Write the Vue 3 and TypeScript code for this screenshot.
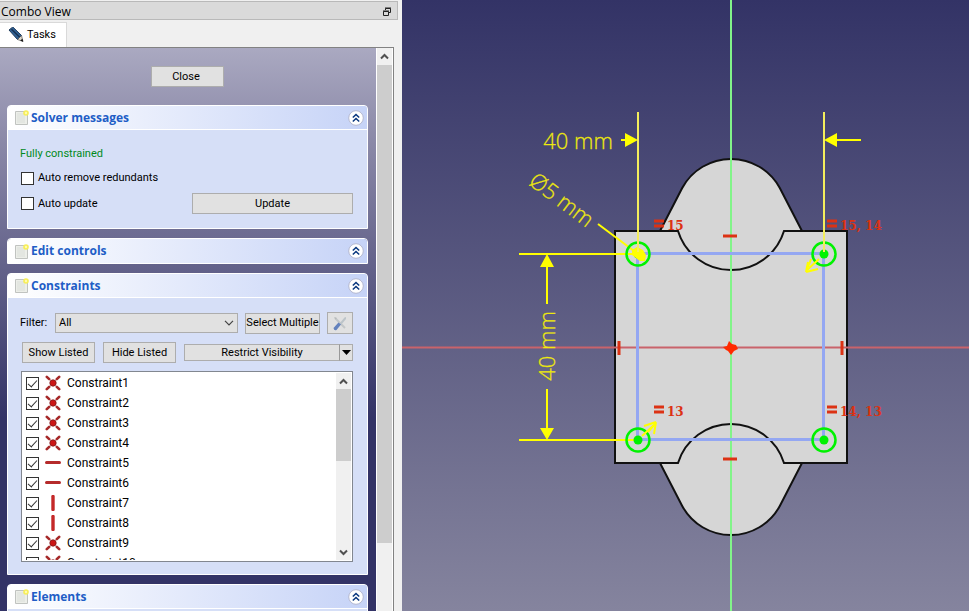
<script setup lang="ts">
import { ref } from 'vue'

type Kind = 'coincident' | 'horizontal' | 'vertical'
interface Constraint { name: string; kind: Kind; on: boolean }

const kinds: Kind[] = [
  'coincident', 'coincident', 'coincident', 'coincident', 'horizontal',
  'horizontal', 'vertical', 'vertical', 'coincident', 'coincident',
]
const constraints = ref<Constraint[]>(
  kinds.map((kind, i) => ({ name: `Constraint${i + 1}`, kind, on: true })),
)
const autoRemove = ref(false)
const autoUpdate = ref(false)
const filter = ref('All')

const sections = [
  { id: 'solver', title: 'Solver messages' },
  { id: 'edit', title: 'Edit controls' },
  { id: 'constraints', title: 'Constraints' },
  { id: 'elements', title: 'Elements' },
]
const corners = [
  { x: 638, y: 254 },
  { x: 824, y: 254 },
  { x: 638, y: 440 },
  { x: 824, y: 440 },
]
const equals = [
  { x: 654, y: 219, text: '15' },
  { x: 827, y: 219, text: '15, 14' },
  { x: 654, y: 405, text: '13' },
  { x: 827, y: 405, text: '14, 13' },
]
</script>

<template>
  <div class="app">
    <aside class="dock">
      <header class="dock-title">
        <span>Combo View</span>
        <button class="float" aria-label="Float panel">
          <svg width="10" height="10" viewBox="0 0 10 10">
            <path d="M3.5 3V1.500h5v4H7M3 1h6" fill="none" stroke="#222" />
            <path d="M1.500 4.500h5v4h-5zM1 4h6" fill="none" stroke="#222" />
          </svg>
        </button>
      </header>
      <nav class="tabs">
        <button class="tab">
          <svg width="16" height="16" viewBox="0 0 16 16">
            <path d="M1 3 4.800 0 13.500 8.500 9.500 12.500z" fill="#2f5f92" stroke="#1c3a5c" />
            <path d="M3.500 2.200 12 10.500" stroke="#16304f" stroke-width="1.400" />
            <path d="M13.500 8.500l1.500 6-5.500-2z" fill="#ddd8cc" stroke="#444" stroke-width=".6" />
            <path d="M15.200 14.800l-3-1.200 2.200-1.800z" fill="#111" />
          </svg>
          <span>Tasks</span>
        </button>
      </nav>

      <div class="tasks">
        <div class="task-list">
          <button class="btn close">Close</button>

          <section v-for="s in sections" :key="s.id" class="group">
            <h2 class="group-head">
              <svg class="page" width="14" height="15" viewBox="0 0 14 15">
                <path d="M.5 1.500h12v13H.5z" fill="#eceee9" stroke="#c0c3c0" />
                <path d="M2 3h8v10H2z" fill="#e3e6e1" />
                <circle cx="11" cy="3" r="2.800" fill="#f7ee58" />
                <circle cx="11" cy="3" r="1.200" fill="#fffbb0" />
              </svg>
              <span>{{ s.title }}</span>
              <button class="fold" :aria-label="`Collapse ${s.title}`">
                <svg width="16" height="16" viewBox="0 0 16 16">
                  <circle cx="8" cy="8" r="7.300" fill="#fff" stroke="#b4b8d0" />
                  <path d="M4.800 7.500 8 4.500l3.200 3M4.800 11.500 8 8.500l3.200 3" fill="none" stroke="#0c3a80" stroke-width="1.600" />
                </svg>
              </button>
            </h2>

            <div v-if="s.id === 'solver'" class="group-body solver">
              <p class="status">Fully constrained</p>
              <label class="check"><input v-model="autoRemove" type="checkbox" />Auto remove redundants</label>
              <div class="row update-row">
                <label class="check"><input v-model="autoUpdate" type="checkbox" />Auto update</label>
                <button class="btn update">Update</button>
              </div>
            </div>

            <div v-else-if="s.id === 'constraints'" class="group-body panel">
              <div class="row filter-row">
                <label for="filter">Filter:</label>
                <div class="select">
                  <select id="filter" v-model="filter">
                    <option>All</option>
                    <option>Normal</option>
                  </select>
                  <svg width="10" height="6" viewBox="0 0 10 6">
                    <path d="M1 .8l4 4 4-4" fill="none" stroke="#444" stroke-width="1.200" />
                  </svg>
                </div>
                <button class="btn multi">Select Multiple</button>
                <button class="btn tool" aria-label="Settings">
                  <svg width="16" height="16" viewBox="0 0 16 16">
                    <path d="M3 3l10 10" stroke="#c3c7c8" stroke-width="2" />
                    <path d="M2 2l1.500 2.500L5 3z" fill="#b5babb" />
                    <path d="M7.500 8.500l5-6 1.500-.5v2l-5 6z" fill="#bcc4c9" />
                    <path d="M1.500 13l5-5.500 2.500 2-4.500 5.500q-2.500 1-3-2z" fill="#6482bd" />
                  </svg>
                </button>
              </div>
              <div class="row button-row">
                <button class="btn listed">Show Listed</button>
                <button class="btn listed">Hide Listed</button>
                <div class="split">
                  <button class="btn restrict">Restrict Visibility</button>
                  <button class="btn drop" aria-label="Visibility options">
                    <svg width="9" height="5" viewBox="0 0 9 5"><path d="M0 0h9L4.500 5z" /></svg>
                  </button>
                </div>
              </div>
              <div class="list">
                <ul>
                  <li v-for="c in constraints" :key="c.name">
                    <label>
                      <input v-model="c.on" type="checkbox" />
                      <svg width="16" height="16" viewBox="0 0 16 16">
                        <g v-if="c.kind === 'coincident'">
                          <path d="M1.800 1.800l2.400 2.400M14.200 1.800l-2.400 2.400M1.800 14.200l2.400-2.400M14.200 14.200l-2.400-2.400" stroke="#a62a2a" stroke-width="2.600" stroke-linecap="round" />
                          <circle cx="8" cy="8" r="3.200" fill="#cc1414" stroke="#7c1a1a" stroke-width=".8" />
                        </g>
                        <path v-else-if="c.kind === 'horizontal'" d="M1.500 7.500h13" stroke="#b52b2b" stroke-width="3" stroke-linecap="round" />
                        <path v-else d="M8 1.500v13" stroke="#c42828" stroke-width="3.400" stroke-linecap="round" />
                      </svg>
                      <span>{{ c.name }}</span>
                    </label>
                  </li>
                </ul>
                <div class="bar inner">
                  <button aria-label="Scroll list up">
                    <svg width="9" height="7" viewBox="0 0 9 7"><path d="M1 5.500 4.500 2 8 5.500" /></svg>
                  </button>
                  <span class="thumb"></span>
                  <button aria-label="Scroll list down">
                    <svg width="9" height="7" viewBox="0 0 9 7"><path d="M1 1.500 4.500 5 8 1.500" /></svg>
                  </button>
                </div>
              </div>
            </div>

            <div v-else-if="s.id === 'elements'" class="group-body blank"></div>
          </section>
        </div>
        <div class="bar outer">
          <button aria-label="Scroll up">
            <svg width="9" height="7" viewBox="0 0 9 7"><path d="M1 5.500 4.500 2 8 5.500" /></svg>
          </button>
          <span class="thumb"></span>
        </div>
      </div>
    </aside>

    <main class="view">
      <svg class="sketch" viewBox="402 0 567 611" preserveAspectRatio="xMidYMid slice">
        <g class="solid">
          <path d="M660 231 682.200 188A55.500 55.500 0 0 1 779.800 188L802 231V463L779.800 506A55.500 55.500 0 0 1 682.200 506L660 463z" />
          <path class="face" d="M615 231h232v232H615z" />
          <path d="M615 231h63a55.500 55.500 0 0 0 106 0h63v232h-63a55.500 55.500 0 0 0-106 0h-63z" />
        </g>

        <path d="M402 347.500h567" stroke="#c9636b" stroke-width="2" />
        <path d="M731 0v611" stroke="#82f489" stroke-width="2" />
        <path d="M637.500 253.500h186v186h-186z" fill="none" stroke="#94a7f2" stroke-width="3" />

        <g class="dim">
          <path d="M638 112v142M824 112v142" />
          <path d="M621 140h5M861 140h-25" />
          <path d="M519 254h119M519 440h119" />
          <path d="M547 266v38M547 389v39M598 224l40 30" />
          <g class="heads">
            <path d="M638 140l-13-7v14zM824 140l13-7v14z" />
            <path d="M547 254l-7 13h14zM547 440l-7-12h14z" />
          </g>
        </g>
        <g class="dim-text">
          <text x="578" y="149">40 mm</text>
          <text transform="translate(555 346) rotate(-90)">40 mm</text>
          <text transform="translate(557 206) rotate(37)">Ø5 mm</text>
        </g>

        <g class="points">
          <g v-for="p in corners" :key="`${p.x}-${p.y}`">
            <circle class="hole" :cx="p.x" :cy="p.y" r="11.500" />
            <circle class="dot" :cx="p.x" :cy="p.y" r="4.500" />
          </g>
        </g>
        <path d="M632 250l5-3 6 3 3 5-1 6h-5l-8-6z" fill="#ff0" />
        <path d="M638 112v140M824 112v140" stroke="#f4ee5c" stroke-width="2" />
        <g class="radius">
          <path d="M819 259l-12 11M806 272l2-10M806 272l12-3M811 259l-3 8" />
          <path d="M642 436l13-12M656 422l-12 4M656 422l-2 12M648 432l7-8" />
        </g>

        <g class="marks">
          <path d="M723 236h14M723 459h14M619 341v14M842 341v14" />
          <path class="origin" d="M723 347l4-1 2-5 3 3 4 1 2 4-4 2-3 4-3-4-2-1z" />
          <g v-for="e in equals" :key="e.text">
            <path :d="`M${e.x} ${e.y + 2}h10M${e.x} ${e.y + 7}h10`" />
            <text :x="e.x + 13" :y="e.y + 11">{{ e.text }}</text>
          </g>
        </g>
      </svg>
    </main>
  </div>
</template>

<style>
body {
  margin: 0;
}
</style>

<style scoped>
.app {
  display: flex;
  height: 100vh;
  overflow: hidden;
  font: 11px/14px Roboto, "Noto Sans", sans-serif;
  color: #000;
}
.app *,
.app *::before {
  box-sizing: border-box;
}
button {
  margin: 0;
  padding: 0;
  border: 0;
  background: none;
  color: inherit;
  font: inherit;
}
svg {
  display: block;
  flex: none;
}
.dock {
  display: flex;
  flex: 0 0 402px;
  flex-direction: column;
  background: #f0f0f0;
}
.dock-title {
  display: flex;
  align-items: center;
  justify-content: space-between;
  flex: none;
  height: 19px;
  margin: 1px 4px 0 0;
  padding: 2px 5px 0 1px;
  border: 1px solid #b9b9b9;
  border-left: 0;
  background: #dadada;
  font-family: "Open Sans", sans-serif;
  font-size: 12px;
}
.tabs {
  display: flex;
  flex: none;
  height: 27px;
  padding-top: 2px;
}
.tab {
  display: flex;
  align-items: center;
  gap: 3px;
  width: 67px;
  padding-left: 8px;
  border: 1px solid #d9d9d9;
  border-width: 1px 1px 0 0;
  background: #fff;
}
.tasks {
  display: flex;
  flex: 1;
  min-height: 0;
  margin-right: 8px;
  border: 1px solid #828282;
  border-width: 1px 1px 0 0;
}
.task-list {
  display: flex;
  flex: 1;
  flex-direction: column;
  gap: 9px;
  min-width: 0;
  overflow: hidden;
  padding: 18px 8px 0 7px;
  background: linear-gradient(#aaa9c1 0, #8f8dab 80px, #333366 370px);
}
.btn {
  border: 1px solid #adadad;
  background: #e1e1e1;
  white-space: nowrap;
}
.close {
  flex: none;
  align-self: center;
  width: 73px;
  height: 21px;
  margin-bottom: 9px;
  padding-right: 3px;
}
.group {
  flex: none;
  overflow: hidden;
  border: 1px solid #fff;
  border-radius: 4px 4px 0 0;
  background: #d6dff7;
}
.group-head {
  display: flex;
  align-items: center;
  height: 23px;
  margin: 0;
  padding: 0 3px 0 7px;
  background: linear-gradient(90deg, #fff, #c6d3f7);
  color: #215dc6;
  font-family: "Open Sans", sans-serif;
  font-size: 12px;
  font-weight: 700;
}
.group-head:only-child {
  height: 24px;
}
.group-head span {
  flex: 1;
  padding-left: 2px;
}
.group-body {
  border-top: 1px solid #fff;
  padding: 0 14px 14px 12px;
}
.solver {
  padding-top: 16px;
}
.status {
  margin: 0 0 8px;
  height: 16px;
  line-height: 16px;
  color: #008a1c;
}
.row {
  display: flex;
  align-items: center;
}
.check {
  display: flex;
  align-items: center;
  gap: 4px;
  height: 16px;
}
.update-row {
  justify-content: space-between;
  margin-top: 7px;
}
.update {
  width: 161px;
  height: 21px;
}
input {
  display: grid;
  place-items: center;
  flex: none;
  width: 13px;
  height: 13px;
  margin: 0;
  border: 1px solid #333;
  background: #fff;
  appearance: none;
}
.solver input {
  margin-left: 1px;
}
input:checked::before {
  width: 5px;
  height: 9px;
  margin-bottom: 2px;
  border: solid #333;
  border-width: 0 1px 1px 0;
  transform: rotate(42deg);
  content: "";
}
.panel {
  padding-top: 14px;
  padding-bottom: 12px;
}
.filter-row label {
  width: 35px;
}
.select {
  display: grid;
  flex: 1;
  align-items: center;
  margin-right: 7px;
}
.select > * {
  grid-area: 1 / 1;
}
.select svg {
  justify-self: end;
  margin-right: 4px;
  pointer-events: none;
}
select {
  width: 100%;
  height: 20px;
  padding: 0 3px;
  border: 1px solid #adadad;
  border-radius: 0;
  background: #e1e1e1;
  color: inherit;
  font: inherit;
  appearance: none;
}
.multi {
  width: 75px;
  height: 21px;
  margin-right: 7px;
}
.tool {
  display: grid;
  place-items: center;
  width: 26px;
  height: 22px;
}
.button-row {
  gap: 8px;
  margin: 8px 0 8px 2px;
}
.listed {
  width: 73px;
  height: 21px;
}
.split {
  display: flex;
  flex: 1;
  height: 17px;
}
.restrict {
  flex: 1;
  border-right: 0;
  line-height: 14px;
}
.drop {
  display: grid;
  place-items: center;
  width: 14px;
  border-left-color: #999;
}
.list {
  display: flex;
  height: 191px;
  margin-left: 1px;
  padding: 1px;
  border: 1px solid #828790;
  background: #fff;
}
.list ul {
  flex: 1;
  margin: 0;
  padding: 0;
  overflow: hidden;
  list-style: none;
}
.list label {
  display: flex;
  align-items: center;
  height: 20px;
  padding-left: 3px;
  font-size: 12px;
}
.list label svg {
  margin: 0 6px;
}
.bar {
  display: flex;
  flex: none;
  flex-direction: column;
  background: #f0f0f0;
}
.bar button {
  display: grid;
  place-items: center;
  height: 16px;
}
.bar path {
  fill: none;
  stroke: #505050;
  stroke-width: 2;
}
.thumb {
  background: #cdcdcd;
}
.inner {
  width: 15px;
}
.inner .thumb {
  height: 72px;
  margin-bottom: auto;
}
.outer {
  width: 17px;
  border: solid #fff;
  border-width: 0 1px;
}
.outer button {
  height: 17px;
}
.outer .thumb {
  height: 478px;
}
.blank {
  height: 60px;
}
.view {
  flex: 1;
  min-width: 0;
  background: linear-gradient(#333366, #85849e);
}
.sketch {
  width: 100%;
  height: 100%;
}
.solid path {
  fill: #d6d6d6;
  stroke: #111;
  stroke-width: 2;
}
.solid .face {
  stroke: none;
}
.dim path {
  fill: none;
  stroke: #ff0;
  stroke-width: 2;
}
.dim .heads path {
  fill: #ff0;
  stroke: none;
}
.dim-text text {
  fill: #f4f010;
  stroke: #e0dc10;
  stroke-width: 0.3px;
  font: 300 22px "Open Sans", sans-serif;
  text-anchor: middle;
}
.hole {
  fill: none;
  stroke: #00f200;
  stroke-width: 2.5;
}
.dot {
  fill: #00f200;
}
.radius path {
  fill: none;
  stroke: #ff0;
  stroke-width: 2;
}
.marks path {
  fill: none;
  stroke: #dc3214;
  stroke-width: 3;
}
.marks .origin {
  fill: #ff2a00;
  stroke: none;
}
.marks text {
  fill: #dc3214;
  font: bold 12px "DejaVu Serif", serif;
}
</style>
